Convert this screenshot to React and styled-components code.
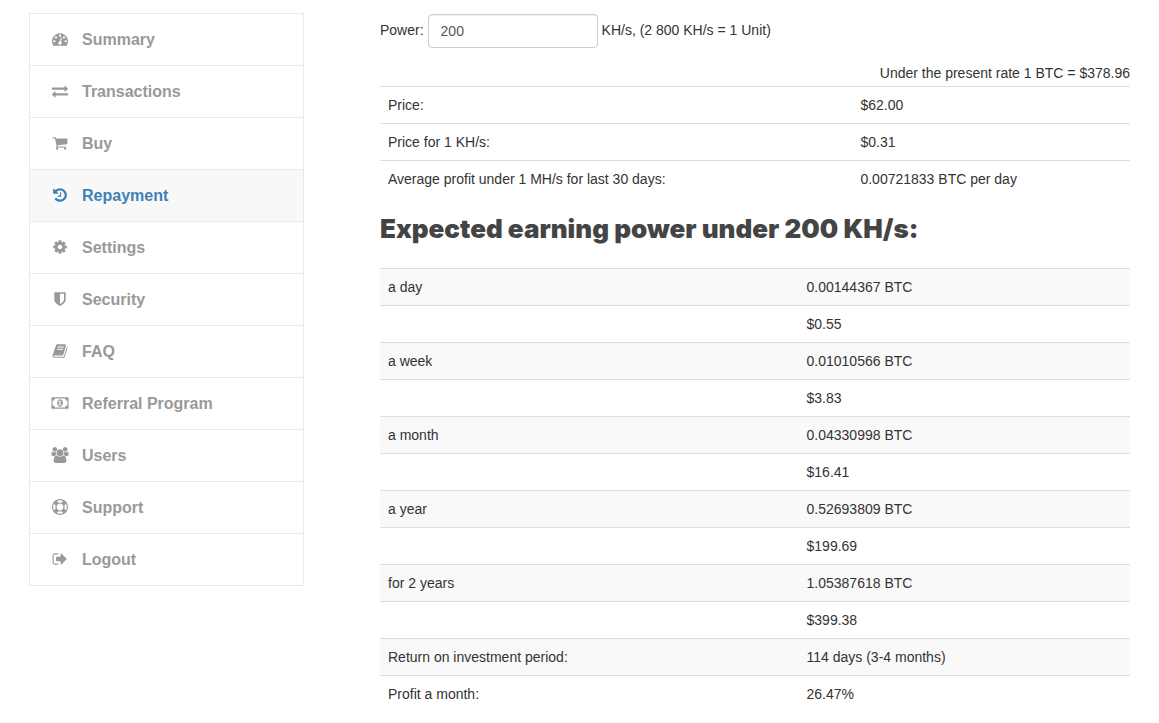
import React, { useState } from 'react';
import styled, { createGlobalStyle } from 'styled-components';

const GlobalStyle = createGlobalStyle`
  * {
    box-sizing: border-box;
  }

  body {
    margin: 0;
    background: #fff;
    color: #333;
    font-family: "Liberation Sans", Arial, sans-serif;
    font-size: 14px;
    line-height: 20px;
  }
`;

const Page = styled.div`
  display: flex;
  align-items: flex-start;
  gap: 76px;
  padding: 13px 29px 0;
`;

const Sidebar = styled.nav`
  flex: 0 0 275px;
  border: 1px solid #eaeaea;
`;

const MenuList = styled.ul`
  margin: 0;
  padding: 0;
  list-style: none;
`;

const MenuItem = styled.li`
  & + & {
    border-top: 1px solid #eaeaea;
  }
`;

const MenuLink = styled.a`
  display: flex;
  align-items: center;
  gap: 12px;
  padding: 14px 20px;
  background: ${props => props.$active ? '#f8f8f8' : '#fff'};
  color: ${props => props.$active ? '#3c82b8' : '#999'};
  font-size: 16px;
  font-weight: bold;
  line-height: 23px;
  text-decoration: none;
`;

const IconSvg = styled.svg`
  width: 20px;
  height: 16px;
  margin-bottom: 1px;
  fill: currentColor;
  overflow: visible;
`;

const Content = styled.main`
  flex: 1;
  min-width: 0;
  padding-top: 1px;
`;

const PowerForm = styled.form`
  display: flex;
  align-items: center;
  gap: 4px;
`;

const PowerLabel = styled.label`
  padding-bottom: 2px;
`;

const PowerNote = styled.span`
  padding-bottom: 2px;
`;

const PowerInput = styled.input`
  width: 170px;
  height: 34px;
  padding: 6px 12px;
  border: 1px solid #ccc;
  border-radius: 4px;
  background: #fff;
  box-shadow: inset 0 1px 1px rgba(0, 0, 0, 0.075);
  color: #555;
  font: inherit;
`;

const Rate = styled.p`
  margin: 15px 0 3px;
  text-align: right;
`;

const Table = styled.table`
  width: 100%;
  border-collapse: collapse;
  border-spacing: 0;
`;

const Row = styled.tr`
  background: ${props => props.$shaded ? '#f9f9f9' : 'transparent'};
`;

const Cell = styled.td`
  padding: 8px;
  border-top: 1px solid #ddd;
  vertical-align: top;
`;

const Title = styled.h3`
  margin: 18px 0 25px;
  color: #444;
  font-family: "Arial Black", Inter, sans-serif;
  font-size: 26px;
  font-weight: 900;
  line-height: 28px;
`;

// Paths are drawn on a 1792 grid, w is the advance of each glyph
const icons = {
  dashboard: {
    w: 1792,
    d: 'M384 1152q0-53-37.5-90.5t-90.5-37.5-90.5 37.5-37.5 90.5 37.5 90.5 90.5 37.5 90.5-37.5 37.5-90.5zm192-448q0-53-37.5-90.5t-90.5-37.5-90.5 37.5-37.5 90.5 37.5 90.5 90.5 37.5 90.5-37.5 37.5-90.5zm428 481l101-382q6-26-7.5-48.5t-38.5-29.5-48 6.5-30 39.5l-101 382q-60 5-107 43.5t-63 98.5q-20 77 20 146t117 89 146-20 89-117q16-60-6-117t-72-91zm660-33q0-53-37.5-90.5t-90.5-37.5-90.5 37.5-37.5 90.5 37.5 90.5 90.5 37.5 90.5-37.5 37.5-90.5zm-640-640q0-53-37.5-90.5t-90.5-37.5-90.5 37.5-37.5 90.5 37.5 90.5 90.5 37.5 90.5-37.5 37.5-90.5zm448 192q0-53-37.5-90.5t-90.5-37.5-90.5 37.5-37.5 90.5 37.5 90.5 90.5 37.5 90.5-37.5 37.5-90.5zm320 448q0 261-141 483-19 29-54 29h-1402q-35 0-54-29-141-221-141-483 0-182 71-348t191-286 286-191 348-71 348 71 286 191 191 286 71 348z',
  },
  exchange: {
    w: 1792,
    d: 'M1792 1184v192q0 13-9.5 22.5t-22.5 9.5h-1376v192q0 13-9.5 22.5t-22.5 9.5q-12 0-24-10l-319-320q-9-9-9-22 0-14 9-23l320-320q9-9 23-9 13 0 22.5 9.5t9.5 22.5v192h1376q13 0 22.5 9.5t9.5 22.5zm0-544q0 14-9 23l-320 320q-9 9-23 9-13 0-22.5-9.5t-9.5-22.5v-192h-1376q-13 0-22.5-9.5t-9.5-22.5v-192q0-13 9.5-22.5t22.5-9.5h1376v-192q0-14 9-23t23-9q12 0 24 10l319 319q9 9 9 23z',
  },
  cart: {
    w: 1792,
    d: 'M704 1536q0 52-38 90t-90 38-90-38-38-90 38-90 90-38 90 38 38 90zm896 0q0 52-38 90t-90 38-90-38-38-90 38-90 90-38 90 38 38 90zm128-1088v512q0 24-16.5 42.5t-40.5 21.5l-1044 122q13 60 13 70 0 16-24 64h920q26 0 45 19t19 45-19 45-45 19h-1024q-26 0-45-19t-19-45q0-11 8-31.5t16-36 21.5-40 15.5-29.5l-177-823h-204q-26 0-45-19t-19-45 19-45 45-19h256q16 0 28.5 6.5t19.5 15.5 13 24.5 8 26 5.5 29.5 4.5 26h1201q26 0 45 19t19 45z',
  },
  history: {
    w: 1792,
    d: 'M1664 896q0 156-61 298t-164 245-245 164-298 61q-172 0-327-72.5t-264-204.5q-7-10-6.5-22.5t8.5-20.5l137-138q10-9 25-9 16 2 23 12 73 95 179 147t225 52q104 0 198.5-40.5t163.5-109.5 109.5-163.5 40.5-198.5-40.5-198.5-109.5-163.5-163.5-109.5-198.5-40.5q-98 0-188 35.5t-160 101.5l137 138q31 30 14 69-17 40-59 40h-448q-26 0-45-19t-19-45v-448q0-42 40-59 39-17 69 14l130 129q107-101 244.5-156.5t284.5-55.5q156 0 298 61t245 164 164 245 61 298zm-640-288v448q0 14-9 23t-23 9h-320q-14 0-23-9t-9-23v-64q0-14 9-23t23-9h224v-352q0-14 9-23t23-9h64q14 0 23 9t9 23z',
  },
  cog: {
    w: 1792,
    d: 'M1152 896q0-106-75-181t-181-75-181 75-75 181 75 181 181 75 181-75 75-181zm512-109v222q0 12-8 23t-20 13l-185 28q-19 54-39 91 35 50 107 138 10 12 10 25t-9 23q-27 37-99 108t-94 71q-12 0-26-9l-138-108q-44 23-91 38-16 136-29 186-7 28-36 28h-222q-14 0-24.5-8.5t-11.5-21.5l-28-184q-49-16-90-37l-141 107q-10 9-25 9-14 0-25-11-126-114-165-168-7-10-7-23 0-12 8-23 15-21 51-66.5t54-70.5q-27-50-41-99l-183-27q-13-2-21-12.5t-8-23.5v-222q0-12 8-23t19-13l186-28q14-46 39-92-40-57-107-138-10-12-10-24 0-10 9-23 26-36 98.5-107.5t94.5-71.5q13 0 26 10l138 107q44-23 91-38 16-136 29-186 7-28 36-28h222q14 0 24.5 8.5t11.5 21.5l28 184q49 16 90 37l142-107q9-9 24-9 13 0 25 10 129 119 165 170 7 8 7 22 0 12-8 23-15 21-51 66.5t-54 70.5q26 50 41 98l183 28q13 2 21 12.5t8 23.5z',
  },
  shield: {
    w: 1792,
    d: 'M1344 960v-640h-448v1137q119-63 213-137 235-184 235-360zm192-768v768q0 86-33.5 170.5t-83 150-118 127.5-126.5 103-121 77.5-89.5 49.5-42.5 20q-12 6-26 6t-26-6q-16-7-42.5-20t-89.5-49.5-121-77.5-126.5-103-118-127.5-83-150-33.5-170.5v-768q0-26 19-45t45-19h1152q26 0 45 19t19 45z',
  },
  book: {
    w: 1792,
    d: 'M1703 478q40 57 18 129l-275 906q-19 64-76.5 107.5t-122.5 43.5h-923q-77 0-148.5-53.5t-99.5-131.5q-24-67-2-127 0-4 3-27t4-37q1-8-3-21.5t-3-19.5q2-11 8-21t16.5-23.5 16.5-23.5q23-38 45-91.5t30-91.5q3-10 .5-30t-.5-28q3-11 17-28t17-23q21-36 42-92t25-90q1-9-2.5-32t.5-28q4-13 22-30.5t22-22.5q19-26 42.5-84.5t27.5-96.5q1-8-3-25.5t-2-26.5q2-8 9-18t18-23 17-21q8-12 16.5-30.5t15-35 16-36 19.5-32 26.5-23.5 36-11.5 47.5 5.5l-1 3q38-9 51-9h761q74 0 114 56t18 130l-274 906q-36 119-71.5 153.5t-128.5 34.5h-869q-27 0-38 15-11 16-1 43 24 70 144 70h923q29 0 56-15.5t35-41.5l300-987q7-22 5-57 38 15 59 43zm-1064 2q-4 13 2 22.5t20 9.5h608q13 0 25.5-9.5t16.5-22.5l21-64q4-13-2-22.5t-20-9.5h-608q-13 0-25.5 9.5t-16.5 22.5zm-83 256q-4 13 2 22.5t20 9.5h608q13 0 25.5-9.5t16.5-22.5l21-64q4-13-2-22.5t-20-9.5h-608q-13 0-25.5 9.5t-16.5 22.5z',
  },
  money: {
    w: 1920,
    d: 'M768 1152h384v-96h-128v-448h-114l-148 137 77 80q42-37 55-57h2v288h-128v96zm512-256q0 70-21 142t-59.5 134-101.5 101-138 39-138-39-101.5-101-59.5-134-21-142 21-142 59.5-134 101.5-101 138-39 138 39 101.5 101 59.5 134 21 142zm512 256v-512q-106 0-181-75t-75-181h-1152q0 106-75 181t-181 75v512q106 0 181 75t75 181h1152q0-106 75-181t181-75zm128-832v1152q0 26-19 45t-45 19h-1792q-26 0-45-19t-19-45v-1152q0-26 19-45t45-19h1792q26 0 45 19t19 45z',
  },
  users: {
    w: 1920,
    d: 'M593 896q-162 5-265 128h-134q-82 0-138-40.5t-56-118.5q0-353 124-353 6 0 43.5 21t97.5 42.5 119 21.5q67 0 133-23-5 37-5 66 0 139 81 256zm1071 637q0 120-73 189.5t-194 69.5h-874q-121 0-194-69.5t-73-189.5q0-53 3.5-103.5t14-109 26.5-108.5 43-97.5 62-81 85.5-53.5 111.5-20q10 0 43 21.5t73 48 107 48 135 21.5 135-21.5 107-48 73-48 43-21.5q61 0 111.5 20t85.5 53.5 62 81 43 97.5 26.5 108.5 14 109 3.5 103.5zm-1024-1277q0 106-75 181t-181 75-181-75-75-181 75-181 181-75 181 75 75 181zm704 384q0 159-112.5 271.5t-271.5 112.5-271.5-112.5-112.5-271.5 112.5-271.5 271.5-112.5 271.5 112.5 112.5 271.5zm576 225q0 78-56 118.5t-138 40.5h-134q-103-123-265-128 81-117 81-256 0-29-5-66 66 23 133 23 59 0 119-21.5t97.5-42.5 43.5-21q124 0 124 353zm-128-609q0 106-75 181t-181 75-181-75-75-181 75-181 181-75 181 75 75 181z',
  },
  lifeRing: {
    w: 1792,
    d: 'M896 0q182 0 348 71t286 191 191 286 71 348-71 348-191 286-286 191-348 71-348-71-286-191-191-286-71-348 71-348 191-286 286-191 348-71zm0 128q-190 0-361 90l194 194q82-28 167-28t167 28l194-194q-171-90-361-90zm-678 1129l194-194q-28-82-28-167t28-167l-194-194q-90 171-90 361t90 361zm678 407q190 0 361-90l-194-194q-82 28-167 28t-167-28l-194 194q171 90 361 90zm0-384q159 0 271.5-112.5t112.5-271.5-112.5-271.5-271.5-112.5-271.5 112.5-112.5 271.5 112.5 271.5 271.5 112.5zm484-217l194 194q90-171 90-361t-90-361l-194 194q28 82 28 167t-28 167z',
  },
  signOut: {
    w: 1792,
    d: 'M704 1440q0 4 1 20t.5 26.5-3 23.5-10 19.5-20.5 6.5h-320q-119 0-203.5-84.5t-84.5-203.5v-704q0-119 84.5-203.5t203.5-84.5h320q13 0 22.5 9.5t9.5 22.5q0 4 1 20t.5 26.5-3 23.5-10 19.5-20.5 6.5h-320q-66 0-113 47t-47 113v704q0 66 47 113t113 47h312l11.5 1 11.5 3 8 5.5 7 9 2 13.5zm928-544q0 26-19 45l-544 544q-19 19-45 19t-45-19-19-45v-288h-448q-26 0-45-19t-19-45v-384q0-26 19-45t45-19h448v-288q0-26 19-45t45-19 45 19l544 544q19 19 19 45z',
  },
};

const menu = [
  { label: 'Summary', icon: 'dashboard' },
  { label: 'Transactions', icon: 'exchange' },
  { label: 'Buy', icon: 'cart' },
  { label: 'Repayment', icon: 'history' },
  { label: 'Settings', icon: 'cog' },
  { label: 'Security', icon: 'shield' },
  { label: 'FAQ', icon: 'book' },
  { label: 'Referral Program', icon: 'money' },
  { label: 'Users', icon: 'users' },
  { label: 'Support', icon: 'lifeRing' },
  { label: 'Logout', icon: 'signOut' },
];

const prices = [
  ['Price:', '$62.00'],
  ['Price for 1 KH/s:', '$0.31'],
  ['Average profit under 1 MH/s for last 30 days:', '0.00721833 BTC per day'],
];

const earnings = [
  ['a day', '0.00144367 BTC'],
  ['', '$0.55'],
  ['a week', '0.01010566 BTC'],
  ['', '$3.83'],
  ['a month', '0.04330998 BTC'],
  ['', '$16.41'],
  ['a year', '0.52693809 BTC'],
  ['', '$199.69'],
  ['for 2 years', '1.05387618 BTC'],
  ['', '$399.38'],
  ['Return on investment period:', '114 days (3-4 months)'],
  ['Profit a month:', '26.47%'],
];

const Icon = ({ name }) => (
  <IconSvg viewBox={`0 0 ${icons[name].w} 1792`} aria-hidden="true">
    <path d={icons[name].d} />
  </IconSvg>
);

const DataTable = ({ rows, striped }) => (
  <Table>
    <tbody>
      {rows.map(([label, value], index) => (
        <Row key={index} $shaded={striped && index % 2 === 0}>
          <Cell>{label}</Cell>
          <Cell>{value}</Cell>
        </Row>
      ))}
    </tbody>
  </Table>
);

const App = () => {
  const [power, setPower] = useState('200');

  return (
    <>
      <GlobalStyle />
      <Page>
        <Sidebar>
          <MenuList>
            {menu.map(({ label, icon }) => (
              <MenuItem key={label}>
                <MenuLink href="#" $active={label === 'Repayment'}>
                  <Icon name={icon} />
                  {label}
                </MenuLink>
              </MenuItem>
            ))}
          </MenuList>
        </Sidebar>
        <Content>
          <PowerForm onSubmit={e => e.preventDefault()}>
            <PowerLabel htmlFor="power">Power:</PowerLabel>
            <PowerInput
              id="power"
              type="text"
              value={power}
              onChange={e => setPower(e.target.value)}
            />
            <PowerNote>KH/s, (2 800 KH/s = 1 Unit)</PowerNote>
          </PowerForm>
          <Rate>Under the present rate 1 BTC = $378.96</Rate>
          <DataTable rows={prices} />
          <Title>Expected earning power under {power} KH/s:</Title>
          <DataTable rows={earnings} striped />
        </Content>
      </Page>
    </>
  );
};

export default App;
